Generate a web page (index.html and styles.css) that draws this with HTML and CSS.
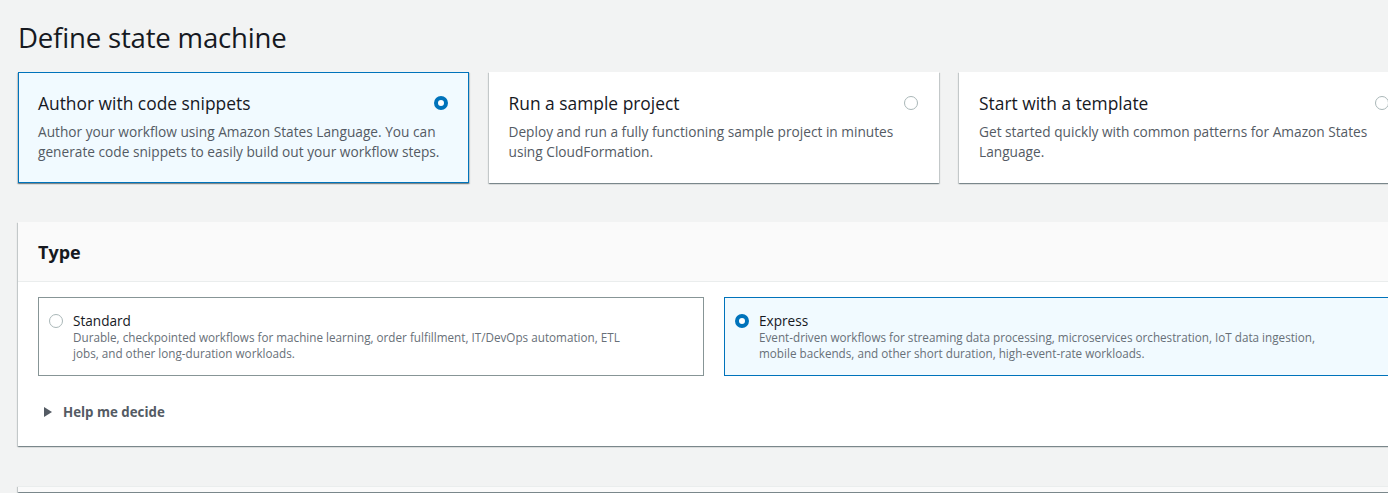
FILE: index.html
```html
<!DOCTYPE html>
<html lang="en">
<head>
<meta charset="utf-8">
<title>Define state machine</title>
<link rel="stylesheet" href="styles.css">
</head>
<body>
<main class="page">
  <h1 class="page-title">Define state machine</h1>

  <div class="tiles">
    <div class="tile tile-selected">
      <div class="tile-head">
        <span class="tile-title">Author with code snippets</span>
        <span class="radio radio-on"></span>
      </div>
      <p class="tile-desc">Author your workflow using Amazon States Language. You can generate code snippets to easily build out your workflow steps.</p>
    </div>
    <div class="tile">
      <div class="tile-head">
        <span class="tile-title">Run a sample project</span>
        <span class="radio"></span>
      </div>
      <p class="tile-desc">Deploy and run a fully functioning sample project in minutes using CloudFormation.</p>
    </div>
    <div class="tile">
      <div class="tile-head">
        <span class="tile-title">Start with a template</span>
        <span class="radio"></span>
      </div>
      <p class="tile-desc">Get started quickly with common patterns for Amazon States Language.</p>
    </div>
  </div>

  <section class="container">
    <header class="container-head">
      <h2 class="container-title">Type</h2>
    </header>
    <div class="container-body">
      <div class="options">
        <div class="option">
          <span class="radio radio-sm"></span>
          <div class="option-text">
            <div class="option-label">Standard</div>
            <div class="option-desc">Durable, checkpointed workflows for machine learning, order fulfillment, IT/DevOps automation, ETL<br>jobs, and other long-duration workloads.</div>
          </div>
        </div>
        <div class="option option-selected">
          <span class="radio radio-sm radio-on"></span>
          <div class="option-text">
            <div class="option-label">Express</div>
            <div class="option-desc">Event-driven workflows for streaming data processing, microservices orchestration, IoT data ingestion,<br>mobile backends, and other short duration, high-event-rate workloads.</div>
          </div>
        </div>
      </div>
      <div class="expander">
        <svg class="caret" width="8" height="10" viewBox="0 0 8 10"><path d="M0 0 L8 5 L0 10 Z" fill="#545b64"/></svg>
        <span class="expander-label">Help me decide</span>
      </div>
    </div>
  </section>

  <section class="container container-next"></section>
</main>
</body>
</html>
```

FILE: styles.css
```css
html, body {
  margin: 0;
  padding: 0;
  background: #f2f3f3;
  overflow: hidden;
}
body {
  font-family: "Open Sans", "Noto Sans", sans-serif;
  color: #16191f;
  width: 1388px;
  height: 493px;
}
.page {
  width: 1392px;
  padding: 18px 0 0 18px;
}
.page-title {
  margin: 0;
  font-size: 27.6px;
  font-weight: 400;
  line-height: 38px;
  letter-spacing: -0.2px;
  color: #16191f;
}
.tiles {
  display: grid;
  grid-template-columns: repeat(3, 450.5px);
  gap: 20px;
  margin-top: 16px;
}
.tile {
  background: #ffffff;
  padding: 18px 19px 19px 19px;
  border: 1px solid transparent;
  box-shadow: 0 1px 1px 0 rgba(0, 28, 36, 0.3), 1px 1px 1px 0 rgba(0, 28, 36, 0.15), -1px 1px 1px 0 rgba(0, 28, 36, 0.15);
  height: 111px;
  box-sizing: border-box;
}
.tile-selected {
  background: #f1faff;
  border-color: #0073bb;
}
.tile-head {
  display: flex;
  justify-content: space-between;
  align-items: center;
}
.tile-title {
  font-size: 17.4px;
  line-height: 24px;
  color: #16191f;
}
.tile-head .radio {
  margin-right: 1px;
}
.tile-desc {
  margin: 7px 0 0 0;
  font-size: 13.7px;
  line-height: 20px;
  color: #545b64;
  padding-right: 4px;
}
.radio {
  width: 14px;
  height: 14px;
  box-sizing: border-box;
  border-radius: 50%;
  border: 1px solid #aab7b8;
  background: #ffffff;
  flex: none;
}
.radio-on {
  border: 4px solid #0073bb;
  background: #ffffff;
}
.container {
  margin-top: 39px;
  background: #ffffff;
  box-shadow: 0 1px 1px 0 rgba(0, 28, 36, 0.3), 1px 1px 1px 0 rgba(0, 28, 36, 0.15), -1px 1px 1px 0 rgba(0, 28, 36, 0.15);
  width: 1392px;
}
.container-head {
  background: #fafafa;
  border-bottom: 1px solid #eaeded;
  padding: 20px 20px 18px 20px;
}
.container-title {
  margin: 0;
  font-size: 18px;
  font-weight: 700;
  line-height: 21px;
  color: #16191f;
}
.container-body {
  padding: 15px 20px 25px 20px;
}
.options {
  display: grid;
  grid-template-columns: 666px 666px;
  gap: 20px;
}
.option {
  display: flex;
  align-items: flex-start;
  border: 1px solid #879596;
  padding: 13px 10px 13px 10px;
  height: 79px;
  box-sizing: border-box;
}
.option-selected {
  border-color: #0073bb;
  background: #f1faff;
}
.radio-sm {
  margin-top: 3px;
  margin-right: 10px;
}
.option-label {
  font-size: 13.6px;
  line-height: 19px;
  color: #16191f;
}
.option-desc {
  font-size: 11.7px;
  line-height: 15.5px;
  color: #687078;
}
.expander {
  display: flex;
  align-items: center;
  margin-top: 27px;
  padding-left: 6px;
}
.caret {
  margin-right: 11px;
}
.expander-label {
  font-size: 13.3px;
  font-weight: 700;
  color: #545b64;
  line-height: 18px;
}
.container-next {
  margin-top: 40px;
  height: 5px;
  background: #fafafa;
  border-top: 1px solid #eaeded;
}
```
